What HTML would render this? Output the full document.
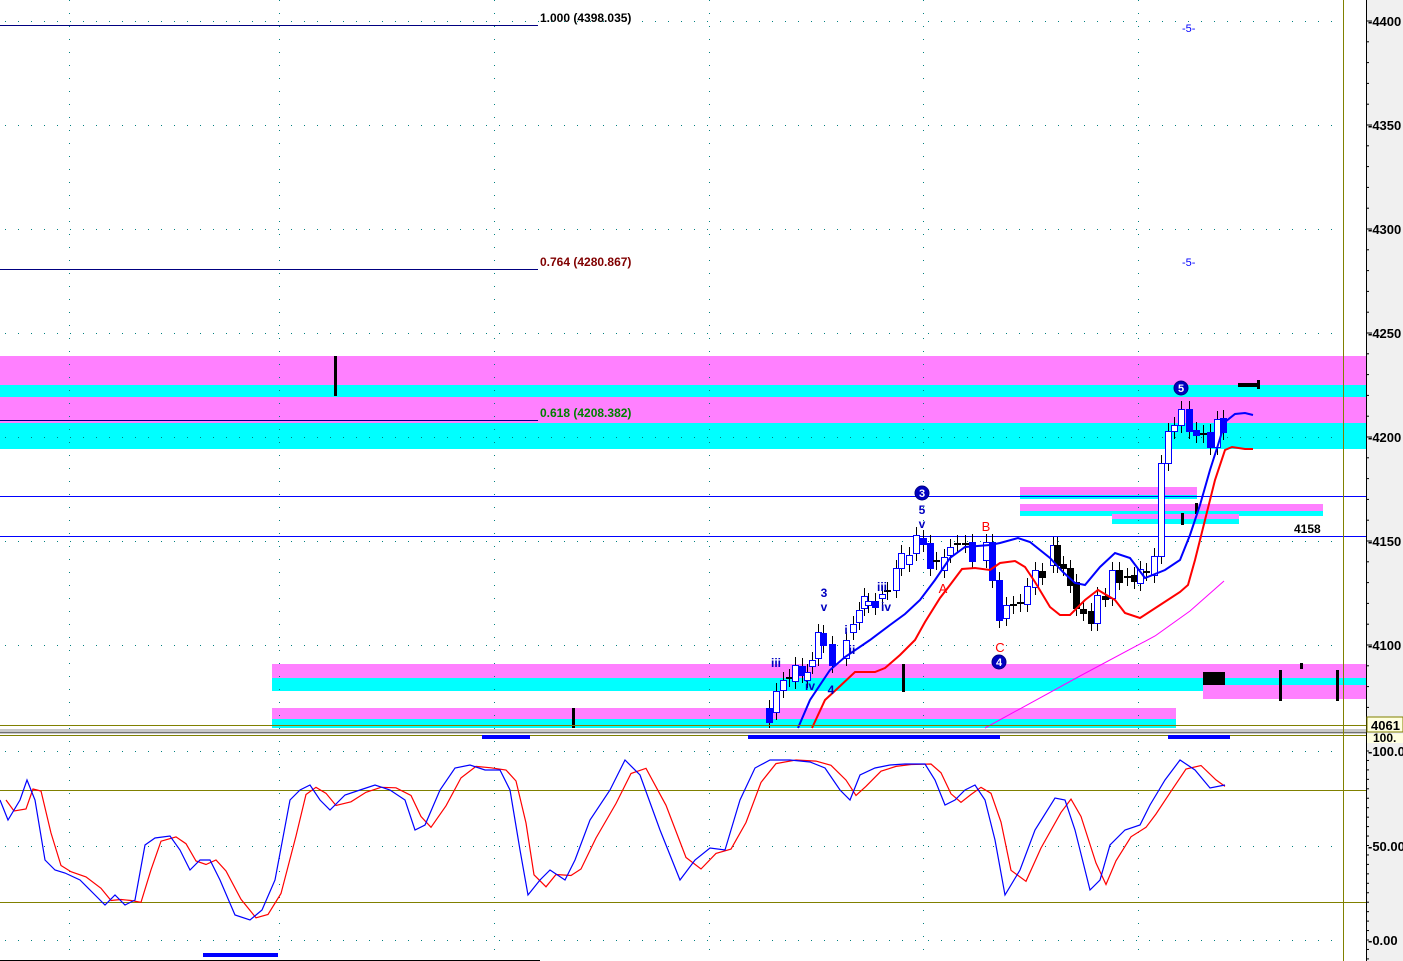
<!DOCTYPE html>
<html><head><meta charset="utf-8"><style>
body{margin:0;background:#fff;overflow:hidden}
svg{display:block;font-family:"Liberation Sans",sans-serif}
</style></head><body>
<svg id="s" width="1403" height="961" viewBox="0 0 1403 961" xmlns="http://www.w3.org/2000/svg">
<rect width="1403" height="961" fill="#fff"/>
<rect x="0" y="356" width="1366" height="29" fill="#ff80ff"/>
<rect x="0" y="385" width="1366" height="12" fill="#00ffff"/>
<rect x="0" y="397" width="1366" height="26" fill="#ff80ff"/>
<rect x="0" y="423" width="1366" height="26" fill="#00ffff"/>
<rect x="272" y="664" width="1094" height="14" fill="#ff80ff"/>
<rect x="272" y="678" width="1094" height="13" fill="#00ffff"/>
<rect x="1203" y="685" width="163" height="14" fill="#ff80ff"/>
<rect x="272" y="708" width="904" height="11" fill="#ff80ff"/>
<rect x="272" y="719" width="904" height="9" fill="#00ffff"/>
<rect x="1020" y="487" width="177" height="8" fill="#ff80ff"/>
<rect x="1020" y="495" width="177" height="4" fill="#00ffff"/>
<rect x="1020" y="504" width="303" height="7" fill="#ff80ff"/>
<rect x="1020" y="511" width="303" height="5" fill="#00ffff"/>
<rect x="1112" y="514" width="127" height="5" fill="#ff80ff"/>
<rect x="1112" y="519" width="127" height="5" fill="#00ffff"/>
<g id="grid" stroke="#008080" stroke-width="1" stroke-dasharray="1,12"></g>
<line x1="0" y1="25.5" x2="538" y2="25.5" stroke="#000080"/>
<line x1="0" y1="269.5" x2="538" y2="269.5" stroke="#000080"/>
<line x1="0" y1="420.5" x2="538" y2="420.5" stroke="#000080"/>
<line x1="0" y1="496.5" x2="1366" y2="496.5" stroke="#0000ff"/>
<line x1="0" y1="536.5" x2="1366" y2="536.5" stroke="#0000ff"/>
<text x="540" y="22" font-size="12" font-weight="bold" fill="#000">1.000 (4398.035)</text>
<text x="540" y="266" font-size="12" font-weight="bold" fill="#800000">0.764 (4280.867)</text>
<text x="540" y="417" font-size="12" font-weight="bold" fill="#008000">0.618 (4208.382)</text>
<text x="1182" y="32" font-size="11" fill="#0000ff">-5-</text>
<text x="1182" y="266" font-size="11" fill="#0000ff">-5-</text>
<text x="1294" y="533" font-size="12" font-weight="bold" fill="#000">4158</text>
<rect x="334" y="356" width="3" height="40" fill="#000"/>
<rect x="572" y="708" width="3" height="20" fill="#000"/>
<rect x="902" y="664" width="3" height="28" fill="#000"/>
<rect x="1279" y="670" width="3" height="31" fill="#000"/>
<rect x="1336" y="670" width="3" height="31" fill="#000"/>
<rect x="1300" y="663" width="3" height="6" fill="#000"/>
<rect x="1203" y="672" width="22" height="13" fill="#000"/>
<rect x="1238" y="383" width="20" height="4" fill="#000"/>
<rect x="1257" y="380" width="3" height="9" fill="#000"/>
<rect x="1181" y="513" width="3" height="12" fill="#000"/>
<rect x="1195" y="503" width="3" height="11" fill="#000"/>
<g id="candles"></g>
<polyline fill="none" stroke="#0000ff" stroke-width="2" points="798,728 810,700 830,670 845,657 870,640 890,625 905,614 920,600 935,580 950,558 965,547 990,545 1000,543 1018,538 1030,542 1050,558 1063,572 1075,583 1085,585 1100,567 1115,553 1130,558 1145,578 1165,570 1180,560 1190,535 1200,505 1210,470 1218,445 1225,422 1235,414 1245,413 1253,415"/>
<polyline fill="none" stroke="#ff0000" stroke-width="2" points="812,728 825,700 838,688 855,672 875,672 885,668 900,655 915,640 925,622 940,598 950,585 962,569 975,568 990,570 1000,563 1015,561 1025,567 1035,582 1050,607 1060,615 1070,615 1085,600 1098,590 1115,600 1125,613 1140,618 1160,605 1180,592 1188,585 1195,560 1205,520 1215,480 1225,450 1232,447 1245,449 1253,449"/>
<polyline fill="none" stroke="#ff00ff" stroke-width="1" points="985,728 1080,676 1155,636 1190,611 1224,581"/>
<g font-size="12" font-weight="bold" fill="#0000c0" text-anchor="middle">
<text x="922" y="514">5</text><text x="922" y="528">v</text>
<text x="824" y="597">3</text><text x="824" y="611">v</text>
<text x="882" y="591">iii</text><text x="886" y="611">iv</text>
<text x="846" y="634">i</text><text x="852" y="654">ii</text>
<text x="776" y="667">iii</text><text x="810" y="690">iv</text><text x="831" y="694">4</text>
</g>
<g font-size="13" fill="#ff0000" text-anchor="middle">
<text x="986" y="531">B</text><text x="943" y="593">A</text><text x="1000" y="652">C</text>
</g>
<g font-size="11" font-weight="bold" text-anchor="middle">
<circle cx="922" cy="493" r="7" fill="#0000c0" stroke="#000080"/><text x="922" y="497" fill="#fff">3</text>
<circle cx="1181" cy="388" r="7" fill="#0000c0" stroke="#000080"/><text x="1181" y="392" fill="#fff">5</text>
<circle cx="999" cy="662" r="7" fill="#0000c0" stroke="#000080"/><text x="999" y="666" fill="#fff">4</text>
</g>
<line x1="0" y1="725.5" x2="1366" y2="725.5" stroke="#808000"/>
<rect x="0" y="729" width="1366" height="5" fill="#c8c8c8"/>
<line x1="0" y1="732.5" x2="1366" y2="732.5" stroke="#707070"/>
<line x1="0" y1="735.5" x2="1366" y2="735.5" stroke="#808000"/>
<rect x="482" y="735" width="48" height="4" fill="#0000ff"/>
<rect x="748" y="735" width="252" height="4" fill="#0000ff"/>
<rect x="1168" y="735" width="62" height="4" fill="#0000ff"/>
<rect x="203" y="953" width="75" height="4" fill="#0000ff"/>
<line x1="0" y1="790.5" x2="1366" y2="790.5" stroke="#808000"/>
<line x1="0" y1="902.5" x2="1366" y2="902.5" stroke="#808000"/>
<polyline id="red" fill="none" stroke="#ff0000" stroke-width="1.2"/>
<polyline id="blue" fill="none" stroke="#0000ff" stroke-width="1.2"/>
<line x1="1343.5" y1="0" x2="1343.5" y2="961" stroke="#808000"/>
<rect x="1366" y="0" width="37" height="961" fill="#f0f0f0"/>
<line x1="1366.5" y1="0" x2="1366.5" y2="961" stroke="#000"/>
<g id="ticks" stroke="#000"></g>
<g font-size="13" font-weight="bold" fill="#000">
<text x="1368" y="26">-4400</text><text x="1368" y="130">-4350</text><text x="1368" y="234">-4300</text>
<text x="1368" y="338">-4250</text><text x="1368" y="442">-4200</text><text x="1368" y="546">-4150</text>
<text x="1368" y="650">-4100</text>
<text x="1368" y="756">-100.0</text><text x="1368" y="851">-50.00</text><text x="1368" y="945">-0.00</text>
</g>
<rect x="1367" y="717" width="36" height="15" fill="#ffffe0" stroke="#808000"/>
<text x="1371" y="730" font-size="13" font-weight="bold">4061</text>
<rect x="1367" y="734" width="36" height="9" fill="#ffffe0"/>
<text x="1373" y="742" font-size="12" font-weight="bold">100.</text>
<line x1="0" y1="960.5" x2="540" y2="960.5" stroke="#000"/>
</svg>
<script>
var NS="http://www.w3.org/2000/svg";
function el(t,a,p){var e=document.createElementNS(NS,t);for(var k in a)e.setAttribute(k,a[k]);document.getElementById(p).appendChild(e);return e;}
[21,125,229,333,437,541,645,751,846,940].forEach(function(y){el("line",{x1:5,y1:y+.5,x2:1343,y2:y+.5},"grid");});
[69,279,494,709,923,1138].forEach(function(x){el("line",{x1:x+.5,y1:0,x2:x+.5,y2:961},"grid");});
for(var y=21;y<725;y+=20.8){el("line",{x1:1366,y1:y,x2:(Math.round((y-21)/20.8)%5==0?1372:1369),y2:y},"ticks");}
for(var y=751;y<961;y+=9.45){el("line",{x1:1366,y1:y,x2:1369,y2:y},"ticks");}
var C=[[769,708,722,0],[776,691,712,1],[783,680,690,1],[789,677,679,0],[795,665,681,1],[802,666,675,0],[807,672,680,1],[812,660,666,1],[818,632,658,1],[823,633,645,0],[832,644,665,0],[846,640,658,1],[853,624,632,1],[859,610,622,1],[864,596,608,1],[868,601,605,1],[875,601,607,0],[882,594,598,1],[887,590,592,1],[896,568,590,1],[901,553,568,1],[909,555,564,1],[916,535,553,1],[923,538,544,0],[930,543,568,0],[936,560,562,0],[944,557,570,1],[950,547,555,1],[957,543,545,0],[965,543,545,0],[972,542,561,0],[986,542,560,1],[992,542,580,0],[999,580,620,0],[1006,605,618,1],[1013,604,606,0],[1020,602,604,0],[1027,586,604,1],[1035,570,587,1],[1042,571,577,0],[1053,545,565,1],[1057,545,565,0],[1063,564,568,0],[1070,568,585,0],[1076,582,608,0],[1083,609,613,0],[1091,611,623,0],[1097,595,623,1],[1105,596,599,0],[1112,570,598,1],[1119,570,582,0],[1127,576,578,0],[1134,575,581,0],[1140,569,583,1],[1146,571,573,0],[1154,556,575,1],[1161,463,556,1],[1168,431,463,1],[1174,425,431,1],[1181,409,425,1],[1189,409,431,0],[1196,430,435,0],[1203,433,435,0],[1210,432,447,0],[1217,419,447,1],[1223,418,432,0]];
C.forEach(function(c){var x=c[0],blu=(x>760&&x<1000)||x>1180;
 el("line",{x1:x+.5,y1:c[1]-8,x2:x+.5,y2:Math.min(c[2]+8,728),stroke:"#000"},"candles");
 if(c[2]-c[1]<3)el("rect",{x:x-3,y:c[1],width:7,height:2,fill:"#000"},"candles");
 else el("rect",{x:x-2.5,y:c[1]+.5,width:6,height:c[2]-c[1],fill:c[3]?"#fff":(blu?"#0000ff":"#000"),stroke:c[3]?"#0000ff":(blu?"#0000ff":"#000")},"candles");});
var B=[[0,800],[8,820],[20,800],[27,780],[35,800],[45,860],[55,870],[65,873],[80,880],[95,895],[105,905],[115,895],[125,905],[135,900],[145,845],[155,838],[170,836],[180,850],[190,870],[200,860],[210,860],[220,880],[235,915],[250,920],[262,910],[275,880],[290,800],[300,790],[310,785],[320,800],[330,810],[345,795],[360,790],[375,785],[390,790],[405,800],[415,830],[425,825],[440,790],[455,768],[470,765],[485,770],[500,770],[510,790],[520,850],[528,895],[540,880],[550,870],[565,880],[575,860],[590,820],[610,790],[625,760],[640,775],[660,830],[680,880],[695,860],[710,848],[725,850],[740,800],[755,768],[770,760],[790,760],[810,762],[825,768],[840,790],[850,800],[860,775],[875,768],[890,765],[905,764],[925,764],[935,780],[945,805],[955,800],[965,790],[975,785],[985,800],[995,840],[1005,895],[1020,870],[1035,830],[1055,798],[1065,800],[1075,830],[1090,890],[1100,880],[1110,845],[1125,830],[1140,825],[1150,805],[1165,780],[1180,760],[1195,770],[1210,788],[1225,785]];
document.getElementById("blue").setAttribute("points",B.map(function(p){return p.join(",")}).join(" "));
var R=[];for(var i=0;i<B.length;i++){var p=B[Math.max(0,i-1)];R.push([Math.min(B[i][0]+6,1225),(B[i][1]*0.55+p[1]*0.45).toFixed(1)]);}
document.getElementById("red").setAttribute("points",R.map(function(p){return p.join(",")}).join(" "));
</script>
</body></html>
